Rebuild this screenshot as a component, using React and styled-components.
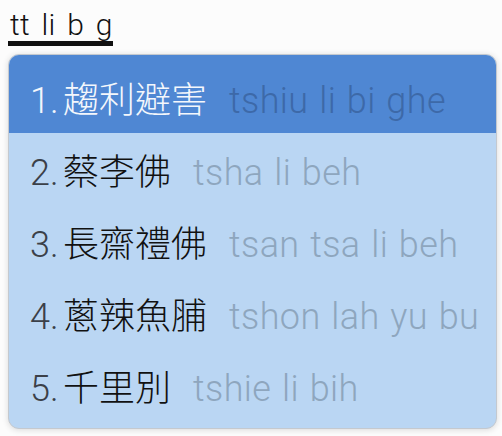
import styled, { createGlobalStyle } from 'styled-components';

const GlobalStyle = createGlobalStyle`
  html, body {
    margin: 0;
    padding: 0;
    background: #fcfcfc;
  }
  body {
    font-family: Roboto, "Noto Sans CJK TC", sans-serif;
  }
`;

const candidates = [
  { han: '趨利避害', roman: 'tshiu li bi ghe' },
  { han: '蔡李佛', roman: 'tsha li beh' },
  { han: '長齋禮佛', roman: 'tsan tsa li beh' },
  { han: '蔥辣魚脯', roman: 'tshon lah yu bu' },
  { han: '千里別', roman: 'tshie li bih' },
];

const Screen = styled.div`
  width: 502px;
  height: 436px;
  padding: 8px 5px 0 8px;
  box-sizing: border-box;
  display: flex;
  flex-direction: column;
`;

const Preedit = styled.div`
  align-self: flex-start;
  font-family: Roboto, sans-serif;
  font-weight: 300;
  font-size: 30px;
  line-height: 33px;
  letter-spacing: 0.3px;
  word-spacing: 4px;
  color: #111;
  padding: 0 0 0 2px;
  border-bottom: 5px solid #111;
  white-space: pre;
`;

const Panel = styled.div`
  margin-top: 8px;
  background: #bad6f3;
  border-radius: 11px;
  border: 1px solid #c4c9cf;
  box-shadow: 0 1px 6px rgba(0, 0, 0, 0.14);
  overflow: hidden;
  padding-bottom: 7px;
  display: flex;
  flex-direction: column;
`;

const Row = styled.div`
  display: flex;
  align-items: baseline;
  height: 72px;
  padding: 0 0 0 21px;
  box-sizing: content-box;
  background: ${p => (p.$active ? '#4f87d3' : 'transparent')};
  font-size: 36px;
  line-height: 72px;
  white-space: nowrap;
  &:first-child {
    padding-top: 6px;
  }
`;

const Num = styled.span`
  font-family: Roboto, sans-serif;
  font-weight: 300;
  color: ${p => (p.$active ? '#f2f6fc' : '#3b4048')};
  width: 33px;
`;

const Han = styled.span`
  font-family: "Noto Sans CJK TC", sans-serif;
  font-weight: 200;
  color: ${p => (p.$active ? '#f4f7fc' : '#111')};
  margin-right: 22px;
`;

const Roman = styled.span`
  font-family: Roboto, sans-serif;
  font-weight: 300;
  letter-spacing: 0.4px;
  word-spacing: 1.5px;
  color: ${p => (p.$active ? '#3d69a8' : '#8ea6be')};
`;

export default function App() {
  return (
    <>
      <GlobalStyle />
      <Screen>
        <Preedit>tt li b g</Preedit>
        <Panel>
          {candidates.map((c, i) => (
            <Row key={i} $active={i === 0}>
              <Num $active={i === 0}>{i + 1}.</Num>
              <Han $active={i === 0}>{c.han}</Han>
              <Roman $active={i === 0}>{c.roman}</Roman>
            </Row>
          ))}
        </Panel>
      </Screen>
    </>
  );
}
